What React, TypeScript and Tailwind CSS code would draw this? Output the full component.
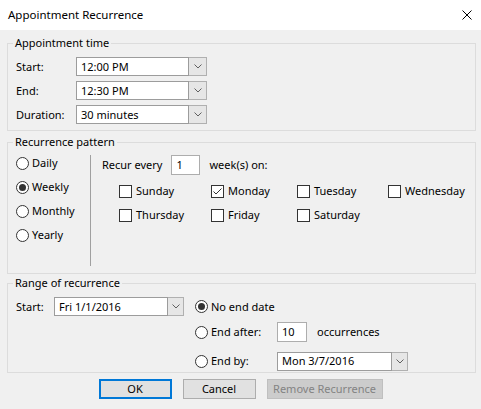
import React from 'react';

const days = [
  { name: 'Sunday', checked: false },
  { name: 'Monday', checked: true },
  { name: 'Tuesday', checked: false },
  { name: 'Wednesday', checked: false },
  { name: 'Thursday', checked: false },
  { name: 'Friday', checked: false },
  { name: 'Saturday', checked: false },
];

function Chevron() {
  return (
    <svg width="8" height="5" viewBox="0 0 8 5" className="text-[#606060]">
      <path d="M0.5 0.5 L4 4 L7.5 0.5" fill="none" stroke="currentColor" strokeWidth="1" />
    </svg>
  );
}

function Combo({ value, width, btn = 18 }: { value: string; width: number; btn?: number }) {
  return (
    <div className="flex h-[19px]">
      <div
        className="flex h-full items-center border border-[#9c9c9c] bg-white pl-[4px]"
        style={{ width }}
      >
        {value}
      </div>
      <div
        className="flex h-full items-center justify-center border border-l-0 border-[#b0b0b0] bg-[#e6e6e6]"
        style={{ width: btn }}
      >
        <Chevron />
      </div>
    </div>
  );
}

function Radio({ label, checked = false }: { label: string; checked?: boolean }) {
  return (
    <div className="flex h-[16px] items-center gap-[3px]">
      <span className="flex h-[13px] w-[13px] items-center justify-center rounded-full border border-[#333] bg-white">
        {checked && <span className="h-[7px] w-[7px] rounded-full bg-[#333]" />}
      </span>
      <span>{label}</span>
    </div>
  );
}

function Check({ label, checked = false }: { label: string; checked?: boolean }) {
  return (
    <div className="flex h-[16px] items-center gap-[4px]">
      <span className="flex h-[13px] w-[13px] items-center justify-center border border-[#333] bg-white">
        {checked && (
          <svg width="11" height="11" viewBox="0 0 11 11">
            <path d="M1.5 5.5 L4 8 L9.5 2.5" fill="none" stroke="#333" strokeWidth="1" />
          </svg>
        )}
      </span>
      <span>{label}</span>
    </div>
  );
}

function Group({ title, className, children }: { title: string; className?: string; children: React.ReactNode }) {
  return (
    <fieldset className={`border border-[#dcdcdc] px-[8px] ${className ?? ''}`}>
      <legend className="ml-[-3px] px-[2px] leading-[14px]">{title}</legend>
      {children}
    </fieldset>
  );
}

export default function App() {
  return (
    <div
      className="h-[409px] w-[481px] bg-[#f0f0f0] text-[11px] leading-[16px] text-black"
      style={{ fontFamily: '"Noto Sans", "Segoe UI", sans-serif' }}
    >
      {/* title bar */}
      <div className="flex h-[30px] items-center justify-between bg-white pl-[8px] pr-[9px]">
        <span className="text-[11.5px]">Appointment Recurrence</span>
        <svg width="10" height="10" viewBox="0 0 10 10">
          <path d="M0.5 0.5 L9.5 9.5 M9.5 0.5 L0.5 9.5" stroke="#000" strokeWidth="1" />
        </svg>
      </div>

      <div className="flex flex-col pl-[7px] pr-[5px] pt-[6px]">
        <Group title="Appointment time" className="pb-[6px] pt-[7px]">
          <div className="flex flex-col gap-[5px]">
            {[
              ['Start:', '12:00 PM'],
              ['End:', '12:30 PM'],
              ['Duration:', '30 minutes'],
            ].map(([label, value]) => (
              <div key={label} className="flex items-center">
                <span className="w-[60px]">{label}</span>
                <Combo value={value} width={113} />
              </div>
            ))}
          </div>
        </Group>

        <Group title="Recurrence pattern" className="mt-[4px] pb-[7px] pt-[6px]">
          <div className="flex">
            <div className="flex w-[74px] flex-col gap-[8px]">
              <Radio label="Daily" />
              <Radio label="Weekly" checked />
              <Radio label="Monthly" />
              <Radio label="Yearly" />
            </div>
            <div className="h-[111px] w-px bg-[#a0a0a0]" />
            <div className="flex flex-col pl-[11px]">
              <div className="flex h-[20px] items-center">
                <span>Recur every</span>
                <div className="ml-[9px] flex h-[20px] w-[29px] items-center border border-[#adadad] bg-white pl-[4px]">
                  1
                </div>
                <span className="ml-[9px]">week(s) on:</span>
              </div>
              <div className="ml-[17px] mt-[8px] grid grid-cols-[92px_86px_91px_auto] gap-y-[8px]">
                {days.map((d) => (
                  <Check key={d.name} label={d.name} checked={d.checked} />
                ))}
              </div>
            </div>
          </div>
        </Group>

        <Group title="Range of recurrence" className="mt-[2px] pb-[1px] pt-[7px]">
          <div className="flex">
            <div className="flex h-[19px] items-center">
              <span className="w-[38px]">Start:</span>
              <Combo value="Fri 1/1/2016" width={114} btn={16} />
            </div>
            <div className="ml-[11px] flex flex-col">
              <div className="flex h-[19px] items-center">
                <Radio label="No end date" checked />
              </div>
              <div className="mt-[6px] flex h-[20px] items-center">
                <div className="w-[82px]">
                  <Radio label="End after:" />
                </div>
                <div className="flex h-[20px] w-[30px] items-center border border-[#adadad] bg-white pl-[4px]">
                  10
                </div>
                <span className="ml-[10px]">occurrences</span>
              </div>
              <div className="mt-[9px] flex h-[20px] items-center">
                <div className="w-[82px]">
                  <Radio label="End by:" />
                </div>
                <Combo value="Mon 3/7/2016" width={115} btn={16} />
              </div>
            </div>
          </div>
        </Group>

        <div className="mt-[6px] flex justify-center gap-[11px] pr-[2px]">
          <button className="flex h-[20px] w-[73px] items-center justify-center border-2 border-[#0078d7] bg-[#e1e1e1]">
            OK
          </button>
          <button className="flex h-[20px] w-[73px] items-center justify-center border border-[#adadad] bg-[#e1e1e1]">
            Cancel
          </button>
          <button className="flex h-[20px] w-[116px] items-center justify-center border border-[#bfbfbf] bg-[#cccccc] text-[#838383]">
            Remove Recurrence
          </button>
        </div>
      </div>
    </div>
  );
}
